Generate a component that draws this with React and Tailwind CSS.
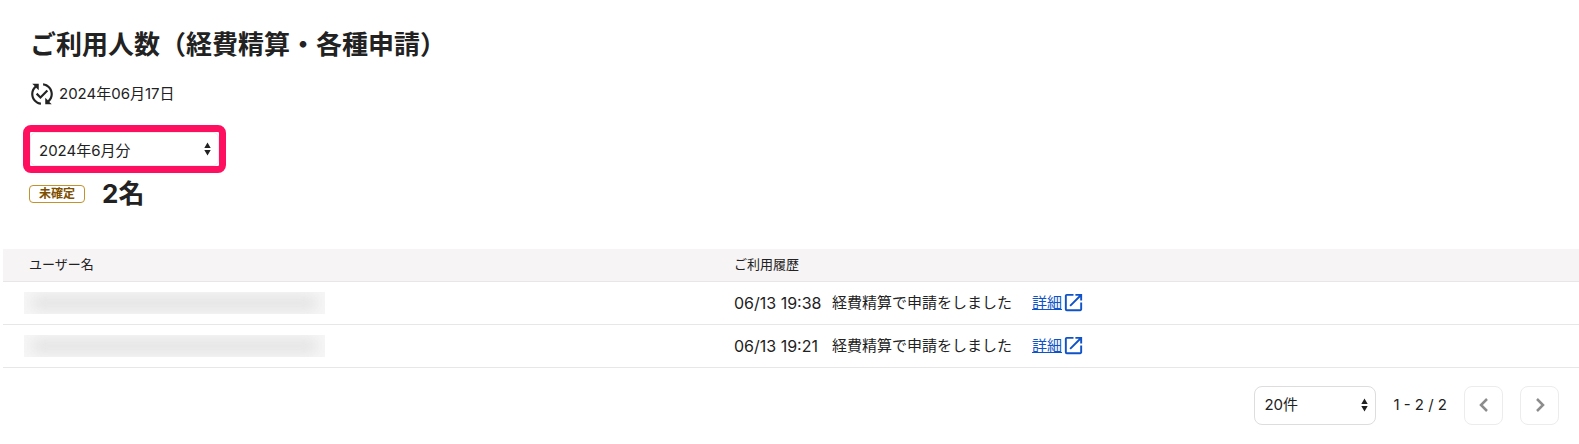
import { MdOpenInNew, MdPublishedWithChanges } from "react-icons/md";

const users = [
  { id: 1, date: "06/13 19:38", action: "経費精算で申請をしました" },
  { id: 2, date: "06/13 19:21", action: "経費精算で申請をしました" },
];

function SelectArrows() {
  return (
    <svg
      viewBox="0 0 7 14"
      className="pointer-events-none absolute inset-y-0 right-2 my-auto h-[14px] w-[7px] fill-[#222]"
      aria-hidden="true"
    >
      <path d="M3.5 0.5 6.7 6H0.3zM3.5 13.5 0.3 8H6.7z" />
    </svg>
  );
}

function PageButton({ label, path }) {
  return (
    <button
      type="button"
      disabled
      aria-label={label}
      className="flex h-[39px] w-[39px] items-center justify-center rounded-lg border border-[#ececec] bg-white text-[#8c8c8c]"
    >
      <svg
        viewBox="0 0 24 24"
        className="h-6 w-6 fill-none stroke-current stroke-[2.5]"
        aria-hidden="true"
      >
        <path d={path} />
      </svg>
    </button>
  );
}

export default function App() {
  return (
    <main className="bg-white pb-5 pt-[29px] font-['Inter','Noto_Sans_CJK_JP',sans-serif] text-[15px] text-[#222]">
      <header className="pl-[29px]">
        <h1 className="pl-px text-[26px] font-bold leading-8">
          ご利用人数（経費精算・各種申請）
        </h1>
        <p className="mt-5 flex items-center gap-1 leading-6">
          <MdPublishedWithChanges className="h-[26px] w-[26px]" />
          2024年06月17日
        </p>
      </header>

      {/* Month */}
      <div className="ml-[23px] mt-[18px] w-[203px] rounded-lg border-[7px] border-[#ff0f5f]">
        <div className="relative">
          <select
            aria-label="対象月"
            className="block h-[34px] w-full appearance-none rounded-md border border-[#eee] bg-white pl-2 pr-6 pt-1"
          >
            <option>2024年6月分</option>
          </select>
          <SelectArrows />
        </div>
      </div>

      <div className="ml-[29px] mt-[5px] flex items-center gap-[17px]">
        <span className="rounded border border-[#c2922e] px-[9px] text-[12px] font-bold leading-4 text-[#7d4f00]">
          未確定
        </span>
        <strong className="text-[26px] font-bold leading-8">2名</strong>
      </div>

      {/* Users */}
      <div className="ml-[3px] mt-[39px]">
        <table className="w-full table-fixed border-collapse text-left">
          <thead>
            <tr className="h-[32px] border-b border-[#e8e7e7] bg-[#f6f4f5] text-[13px]">
              <th className="w-[705px] pl-[26px] font-normal">ユーザー名</th>
              <th className="pl-[26px] font-normal">ご利用履歴</th>
            </tr>
          </thead>
          <tbody>
            {users.map((user) => (
              <tr key={user.id} className="h-[43px] border-b border-[#e8e7e7]">
                <td className="pl-[21px]">
                  <div className="h-[22px] w-[301px] overflow-hidden bg-[#f7f7f7] px-2 py-1">
                    <div className="h-full bg-[#e2e2e2] blur-[7px]" />
                  </div>
                </td>
                <td className="pl-[26px]">
                  <div className="flex items-center leading-6">
                    <span className="w-[98px] text-base">{user.date}</span>
                    <span>{user.action}</span>
                    <a
                      href="#detail"
                      className="ml-5 flex items-center text-[#1053c8] underline"
                    >
                      詳細
                      <MdOpenInNew className="h-[23px] w-[23px]" />
                    </a>
                  </div>
                </td>
              </tr>
            ))}
          </tbody>
        </table>
      </div>

      <nav className="mr-5 mt-[18px] flex items-center justify-end gap-[17px]">
        <div className="relative w-[122px]">
          <select
            aria-label="表示件数"
            className="block h-[39px] w-full appearance-none rounded-lg border border-[#ddd] bg-white pl-[9px] pr-6"
          >
            <option>20件</option>
          </select>
          <SelectArrows />
        </div>
        <span>1 - 2 / 2</span>
        <PageButton label="前のページ" path="M15 6 9 12l6 6" />
        <PageButton label="次のページ" path="m9 6 6 6-6 6" />
      </nav>
    </main>
  );
}
